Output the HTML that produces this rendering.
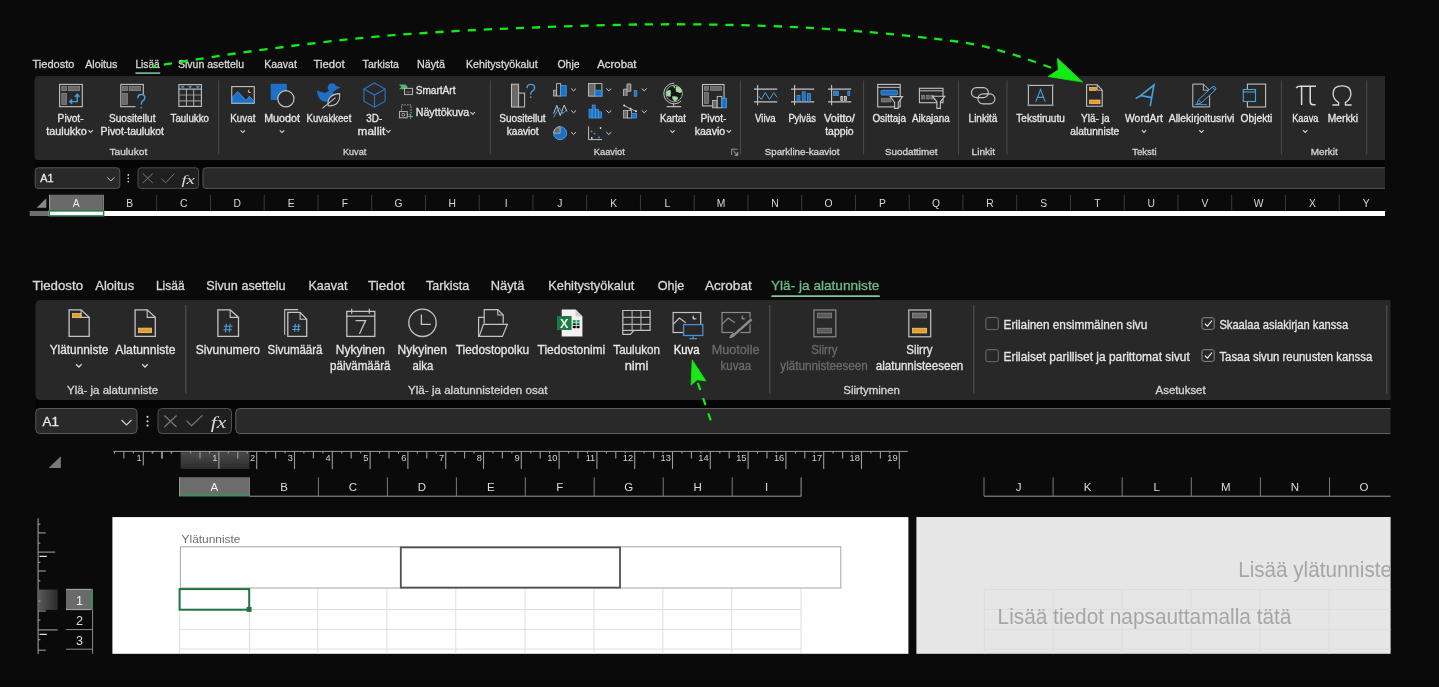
<!DOCTYPE html>
<html><head><meta charset="utf-8"><style>
html,body{margin:0;padding:0;background:#0a0a0a;width:1439px;height:687px;overflow:hidden}
svg{display:block;font-family:"Liberation Sans",sans-serif;will-change:transform}
</style></head><body>
<svg width="1439" height="687" viewBox="0 0 1439 687">
<rect x="0" y="0" width="1439" height="687" fill="#0a0a0a"/>
<text x="32.5" y="68.0" font-size="11.5" fill="#d9d9d9" font-weight="400" textLength="41.9" lengthAdjust="spacingAndGlyphs" stroke="#d9d9d9" stroke-width="0.3">Tiedosto</text>
<text x="85.2" y="68.0" font-size="11.5" fill="#d9d9d9" font-weight="400" textLength="32.2" lengthAdjust="spacingAndGlyphs" stroke="#d9d9d9" stroke-width="0.3">Aloitus</text>
<text x="135.4" y="68.0" font-size="11.5" fill="#d9d9d9" font-weight="400" textLength="24.3" lengthAdjust="spacingAndGlyphs" stroke="#d9d9d9" stroke-width="0.3">Lisää</text>
<text x="178.0" y="68.0" font-size="11.5" fill="#d9d9d9" font-weight="400" textLength="66.0" lengthAdjust="spacingAndGlyphs" stroke="#d9d9d9" stroke-width="0.3">Sivun asettelu</text>
<text x="264.2" y="68.0" font-size="11.5" fill="#d9d9d9" font-weight="400" textLength="32.7" lengthAdjust="spacingAndGlyphs" stroke="#d9d9d9" stroke-width="0.3">Kaavat</text>
<text x="313.6" y="68.0" font-size="11.5" fill="#d9d9d9" font-weight="400" textLength="31.0" lengthAdjust="spacingAndGlyphs" stroke="#d9d9d9" stroke-width="0.3">Tiedot</text>
<text x="362.6" y="68.0" font-size="11.5" fill="#d9d9d9" font-weight="400" textLength="36.4" lengthAdjust="spacingAndGlyphs" stroke="#d9d9d9" stroke-width="0.3">Tarkista</text>
<text x="416.9" y="68.0" font-size="11.5" fill="#d9d9d9" font-weight="400" textLength="28.1" lengthAdjust="spacingAndGlyphs" stroke="#d9d9d9" stroke-width="0.3">Näytä</text>
<text x="465.9" y="68.0" font-size="11.5" fill="#d9d9d9" font-weight="400" textLength="71.9" lengthAdjust="spacingAndGlyphs" stroke="#d9d9d9" stroke-width="0.3">Kehitystyökalut</text>
<text x="557.4" y="68.0" font-size="11.5" fill="#d9d9d9" font-weight="400" textLength="22.2" lengthAdjust="spacingAndGlyphs" stroke="#d9d9d9" stroke-width="0.3">Ohje</text>
<text x="597.2" y="68.0" font-size="11.5" fill="#d9d9d9" font-weight="400" textLength="39.3" lengthAdjust="spacingAndGlyphs" stroke="#d9d9d9" stroke-width="0.3">Acrobat</text>
<rect x="135.2" y="72.2" width="25.3" height="1.7" fill="#6fb48b" rx="0.8" />
<path d="M38.5 76 H1385 V160 H38.5 Q34.5 160 34.5 156 V80 Q34.5 76 38.5 76 Z" fill="#282828"/>
<line x1="218.6" y1="80.6" x2="218.6" y2="154.6" stroke="#4a4a4a" stroke-width="1" />
<line x1="490.4" y1="80.6" x2="490.4" y2="154.6" stroke="#4a4a4a" stroke-width="1" />
<line x1="740.5" y1="80.6" x2="740.5" y2="154.6" stroke="#4a4a4a" stroke-width="1" />
<line x1="863.6" y1="80.6" x2="863.6" y2="154.6" stroke="#4a4a4a" stroke-width="1" />
<line x1="958.5" y1="80.6" x2="958.5" y2="154.6" stroke="#4a4a4a" stroke-width="1" />
<line x1="1007" y1="80.6" x2="1007" y2="154.6" stroke="#4a4a4a" stroke-width="1" />
<line x1="1281.4" y1="80.6" x2="1281.4" y2="154.6" stroke="#4a4a4a" stroke-width="1" />
<line x1="1366.7" y1="80.6" x2="1366.7" y2="154.6" stroke="#4a4a4a" stroke-width="1" />
<text x="57.6" y="121.5" font-size="10.1" fill="#e6e6e6" font-weight="400" textLength="26.0" lengthAdjust="spacingAndGlyphs" stroke="#e6e6e6" stroke-width="0.3">Pivot-</text>
<text x="46.2" y="134.9" font-size="10.1" fill="#e6e6e6" font-weight="400" textLength="40.6" lengthAdjust="spacingAndGlyphs" stroke="#e6e6e6" stroke-width="0.3">taulukko</text>
<text x="109.0" y="121.5" font-size="10.1" fill="#e6e6e6" font-weight="400" textLength="46.5" lengthAdjust="spacingAndGlyphs" stroke="#e6e6e6" stroke-width="0.3">Suositellut</text>
<text x="100.6" y="134.9" font-size="10.1" fill="#e6e6e6" font-weight="400" textLength="63.3" lengthAdjust="spacingAndGlyphs" stroke="#e6e6e6" stroke-width="0.3">Pivot-taulukot</text>
<text x="170.6" y="121.5" font-size="10.1" fill="#e6e6e6" font-weight="400" textLength="38.4" lengthAdjust="spacingAndGlyphs" stroke="#e6e6e6" stroke-width="0.3">Taulukko</text>
<text x="230.3" y="121.5" font-size="10.1" fill="#e6e6e6" font-weight="400" textLength="25.1" lengthAdjust="spacingAndGlyphs" stroke="#e6e6e6" stroke-width="0.3">Kuvat</text>
<text x="264.2" y="121.5" font-size="10.1" fill="#e6e6e6" font-weight="400" textLength="35.7" lengthAdjust="spacingAndGlyphs" stroke="#e6e6e6" stroke-width="0.3">Muodot</text>
<text x="306.6" y="121.5" font-size="10.1" fill="#e6e6e6" font-weight="400" textLength="44.7" lengthAdjust="spacingAndGlyphs" stroke="#e6e6e6" stroke-width="0.3">Kuvakkeet</text>
<text x="366.3" y="121.5" font-size="10.1" fill="#e6e6e6" font-weight="400" textLength="15.9" lengthAdjust="spacingAndGlyphs" stroke="#e6e6e6" stroke-width="0.3">3D-</text>
<text x="357.6" y="134.9" font-size="10.1" fill="#e6e6e6" font-weight="400" textLength="27.6" lengthAdjust="spacingAndGlyphs" stroke="#e6e6e6" stroke-width="0.3">mallit</text>
<text x="415.7" y="93.8" font-size="10.1" fill="#e6e6e6" font-weight="400" textLength="39.8" lengthAdjust="spacingAndGlyphs" stroke="#e6e6e6" stroke-width="0.3">SmartArt</text>
<text x="415.7" y="115.8" font-size="10.1" fill="#e6e6e6" font-weight="400" textLength="53.5" lengthAdjust="spacingAndGlyphs" stroke="#e6e6e6" stroke-width="0.3">Näyttökuva</text>
<text x="499.3" y="121.5" font-size="10.1" fill="#e6e6e6" font-weight="400" textLength="46.3" lengthAdjust="spacingAndGlyphs" stroke="#e6e6e6" stroke-width="0.3">Suositellut</text>
<text x="506.8" y="134.9" font-size="10.1" fill="#e6e6e6" font-weight="400" textLength="31.8" lengthAdjust="spacingAndGlyphs" stroke="#e6e6e6" stroke-width="0.3">kaaviot</text>
<text x="660.0" y="121.5" font-size="10.1" fill="#e6e6e6" font-weight="400" textLength="26.0" lengthAdjust="spacingAndGlyphs" stroke="#e6e6e6" stroke-width="0.3">Kartat</text>
<text x="700.4" y="121.5" font-size="10.1" fill="#e6e6e6" font-weight="400" textLength="26.1" lengthAdjust="spacingAndGlyphs" stroke="#e6e6e6" stroke-width="0.3">Pivot-</text>
<text x="694.7" y="134.9" font-size="10.1" fill="#e6e6e6" font-weight="400" textLength="30.5" lengthAdjust="spacingAndGlyphs" stroke="#e6e6e6" stroke-width="0.3">kaavio</text>
<text x="755.0" y="121.5" font-size="10.1" fill="#e6e6e6" font-weight="400" textLength="20.7" lengthAdjust="spacingAndGlyphs" stroke="#e6e6e6" stroke-width="0.3">Viiva</text>
<text x="788.4" y="121.5" font-size="10.1" fill="#e6e6e6" font-weight="400" textLength="27.5" lengthAdjust="spacingAndGlyphs" stroke="#e6e6e6" stroke-width="0.3">Pylväs</text>
<text x="823.9" y="121.5" font-size="10.1" fill="#e6e6e6" font-weight="400" textLength="31.0" lengthAdjust="spacingAndGlyphs" stroke="#e6e6e6" stroke-width="0.3">Voitto/</text>
<text x="825.2" y="134.9" font-size="10.1" fill="#e6e6e6" font-weight="400" textLength="28.5" lengthAdjust="spacingAndGlyphs" stroke="#e6e6e6" stroke-width="0.3">tappio</text>
<text x="872.4" y="121.5" font-size="10.1" fill="#e6e6e6" font-weight="400" textLength="33.5" lengthAdjust="spacingAndGlyphs" stroke="#e6e6e6" stroke-width="0.3">Osittaja</text>
<text x="912.0" y="121.5" font-size="10.1" fill="#e6e6e6" font-weight="400" textLength="37.7" lengthAdjust="spacingAndGlyphs" stroke="#e6e6e6" stroke-width="0.3">Aikajana</text>
<text x="968.6" y="121.5" font-size="10.1" fill="#e6e6e6" font-weight="400" textLength="28.8" lengthAdjust="spacingAndGlyphs" stroke="#e6e6e6" stroke-width="0.3">Linkitä</text>
<text x="1016.3" y="121.5" font-size="10.1" fill="#e6e6e6" font-weight="400" textLength="48.5" lengthAdjust="spacingAndGlyphs" stroke="#e6e6e6" stroke-width="0.3">Tekstiruutu</text>
<text x="1081.0" y="121.5" font-size="10.1" fill="#e6e6e6" font-weight="400" textLength="28.5" lengthAdjust="spacingAndGlyphs" stroke="#e6e6e6" stroke-width="0.3">Ylä- ja</text>
<text x="1070.3" y="134.9" font-size="10.1" fill="#e6e6e6" font-weight="400" textLength="48.9" lengthAdjust="spacingAndGlyphs" stroke="#e6e6e6" stroke-width="0.3">alatunniste</text>
<text x="1125.0" y="121.5" font-size="10.1" fill="#e6e6e6" font-weight="400" textLength="37.9" lengthAdjust="spacingAndGlyphs" stroke="#e6e6e6" stroke-width="0.3">WordArt</text>
<text x="1168.8" y="121.5" font-size="10.1" fill="#e6e6e6" font-weight="400" textLength="65.6" lengthAdjust="spacingAndGlyphs" stroke="#e6e6e6" stroke-width="0.3">Allekirjoitusrivi</text>
<text x="1240.6" y="121.5" font-size="10.1" fill="#e6e6e6" font-weight="400" textLength="31.8" lengthAdjust="spacingAndGlyphs" stroke="#e6e6e6" stroke-width="0.3">Objekti</text>
<text x="1292.2" y="121.5" font-size="10.1" fill="#e6e6e6" font-weight="400" textLength="26.2" lengthAdjust="spacingAndGlyphs" stroke="#e6e6e6" stroke-width="0.3">Kaava</text>
<text x="1327.8" y="121.5" font-size="10.1" fill="#e6e6e6" font-weight="400" textLength="30.2" lengthAdjust="spacingAndGlyphs" stroke="#e6e6e6" stroke-width="0.3">Merkki</text>
<path d="M88.4 130.2 L90.6 132.4 L92.8 130.2" fill="none" stroke="#d8d8d8" stroke-width="1.05"/>
<path d="M240.6 130.4 L242.8 132.6 L245.0 130.4" fill="none" stroke="#d8d8d8" stroke-width="1.05"/>
<path d="M279.8 130.4 L282.0 132.6 L284.2 130.4" fill="none" stroke="#d8d8d8" stroke-width="1.05"/>
<path d="M386.1 130.2 L388.3 132.4 L390.5 130.2" fill="none" stroke="#d8d8d8" stroke-width="1.05"/>
<path d="M470.5 112.1 L472.7 114.3 L474.9 112.1" fill="none" stroke="#d8d8d8" stroke-width="1.05"/>
<path d="M670.3 130.4 L672.5 132.6 L674.7 130.4" fill="none" stroke="#d8d8d8" stroke-width="1.05"/>
<path d="M726.6 130.2 L728.8 132.4 L731.0 130.2" fill="none" stroke="#d8d8d8" stroke-width="1.05"/>
<path d="M1141.8 130.2 L1144.0 132.4 L1146.2 130.2" fill="none" stroke="#d8d8d8" stroke-width="1.05"/>
<path d="M1199.2 130.2 L1201.4 132.4 L1203.6 130.2" fill="none" stroke="#d8d8d8" stroke-width="1.05"/>
<path d="M1303.0 130.2 L1305.2 132.4 L1307.4 130.2" fill="none" stroke="#d8d8d8" stroke-width="1.05"/>
<text x="109.5" y="154.7" font-size="9.6" fill="#d4d4d4" font-weight="400" textLength="37.7" lengthAdjust="spacingAndGlyphs" stroke="#d4d4d4" stroke-width="0.3">Taulukot</text>
<text x="342.9" y="154.7" font-size="9.6" fill="#d4d4d4" font-weight="400" textLength="23.4" lengthAdjust="spacingAndGlyphs" stroke="#d4d4d4" stroke-width="0.3">Kuvat</text>
<text x="593.8" y="154.7" font-size="9.6" fill="#d4d4d4" font-weight="400" textLength="31.0" lengthAdjust="spacingAndGlyphs" stroke="#d4d4d4" stroke-width="0.3">Kaaviot</text>
<text x="764.8" y="154.7" font-size="9.6" fill="#d4d4d4" font-weight="400" textLength="74.7" lengthAdjust="spacingAndGlyphs" stroke="#d4d4d4" stroke-width="0.3">Sparkline-kaaviot</text>
<text x="885.0" y="154.7" font-size="9.6" fill="#d4d4d4" font-weight="400" textLength="52.4" lengthAdjust="spacingAndGlyphs" stroke="#d4d4d4" stroke-width="0.3">Suodattimet</text>
<text x="971.6" y="154.7" font-size="9.6" fill="#d4d4d4" font-weight="400" textLength="23.4" lengthAdjust="spacingAndGlyphs" stroke="#d4d4d4" stroke-width="0.3">Linkit</text>
<text x="1132.2" y="154.7" font-size="9.6" fill="#d4d4d4" font-weight="400" textLength="24.4" lengthAdjust="spacingAndGlyphs" stroke="#d4d4d4" stroke-width="0.3">Teksti</text>
<text x="1310.7" y="154.7" font-size="9.6" fill="#d4d4d4" font-weight="400" textLength="27.1" lengthAdjust="spacingAndGlyphs" stroke="#d4d4d4" stroke-width="0.3">Merkit</text>
<rect x="34.5" y="160" width="1350.5" height="7.3" fill="#050505" />
<rect x="35.2" y="167.8" width="84.6" height="20.6" fill="#292929" rx="3" stroke="#565656" stroke-width="1" />
<text x="40.3" y="182.2" font-size="10.5" fill="#e8e8e8" font-weight="400" textLength="13.4" lengthAdjust="spacingAndGlyphs" stroke="#e8e8e8" stroke-width="0.3">A1</text>
<path d="M107.3 177.4 L110.8 181.0 L114.3 177.4" fill="none" stroke="#cfcfcf" stroke-width="1"/>
<circle cx="128.3" cy="175" r="0.9" fill="#d0d0d0"/>
<circle cx="128.3" cy="178.3" r="0.9" fill="#d0d0d0"/>
<circle cx="128.3" cy="181.6" r="0.9" fill="#d0d0d0"/>
<rect x="138" y="167.8" width="60.6" height="20.6" fill="#1f1f1f" rx="3" stroke="#4e4e4e" stroke-width="1" />
<path d="M1385 167.8 H206 Q203 167.8 203 170.8 V185.4 Q203 188.4 206 188.4 H1385" fill="#292929" stroke="#565656" stroke-width="1"/>
<rect x="30" y="194" width="1355" height="17" fill="#0a0a0a" />
<path d="M46.3 198.3 L46.3 207.8 L36.7 207.8 Z" fill="#8a8a8a"/>
<rect x="49.2" y="194.7" width="54.5" height="16" fill="#6a6a6a" />
<line x1="102.95" y1="195" x2="102.95" y2="210.5" stroke="#3c3c3c" stroke-width="1" />
<line x1="156.7" y1="195" x2="156.7" y2="210.5" stroke="#3c3c3c" stroke-width="1" />
<line x1="210.45" y1="195" x2="210.45" y2="210.5" stroke="#3c3c3c" stroke-width="1" />
<line x1="264.2" y1="195" x2="264.2" y2="210.5" stroke="#3c3c3c" stroke-width="1" />
<line x1="317.95" y1="195" x2="317.95" y2="210.5" stroke="#3c3c3c" stroke-width="1" />
<line x1="371.7" y1="195" x2="371.7" y2="210.5" stroke="#3c3c3c" stroke-width="1" />
<line x1="425.45" y1="195" x2="425.45" y2="210.5" stroke="#3c3c3c" stroke-width="1" />
<line x1="479.2" y1="195" x2="479.2" y2="210.5" stroke="#3c3c3c" stroke-width="1" />
<line x1="532.95" y1="195" x2="532.95" y2="210.5" stroke="#3c3c3c" stroke-width="1" />
<line x1="586.7" y1="195" x2="586.7" y2="210.5" stroke="#3c3c3c" stroke-width="1" />
<line x1="640.45" y1="195" x2="640.45" y2="210.5" stroke="#3c3c3c" stroke-width="1" />
<line x1="694.2" y1="195" x2="694.2" y2="210.5" stroke="#3c3c3c" stroke-width="1" />
<line x1="747.95" y1="195" x2="747.95" y2="210.5" stroke="#3c3c3c" stroke-width="1" />
<line x1="801.7" y1="195" x2="801.7" y2="210.5" stroke="#3c3c3c" stroke-width="1" />
<line x1="855.45" y1="195" x2="855.45" y2="210.5" stroke="#3c3c3c" stroke-width="1" />
<line x1="909.2" y1="195" x2="909.2" y2="210.5" stroke="#3c3c3c" stroke-width="1" />
<line x1="962.95" y1="195" x2="962.95" y2="210.5" stroke="#3c3c3c" stroke-width="1" />
<line x1="1016.7" y1="195" x2="1016.7" y2="210.5" stroke="#3c3c3c" stroke-width="1" />
<line x1="1070.45" y1="195" x2="1070.45" y2="210.5" stroke="#3c3c3c" stroke-width="1" />
<line x1="1124.2" y1="195" x2="1124.2" y2="210.5" stroke="#3c3c3c" stroke-width="1" />
<line x1="1177.95" y1="195" x2="1177.95" y2="210.5" stroke="#3c3c3c" stroke-width="1" />
<line x1="1231.7" y1="195" x2="1231.7" y2="210.5" stroke="#3c3c3c" stroke-width="1" />
<line x1="1285.45" y1="195" x2="1285.45" y2="210.5" stroke="#3c3c3c" stroke-width="1" />
<line x1="1339.2" y1="195" x2="1339.2" y2="210.5" stroke="#3c3c3c" stroke-width="1" />
<text x="76.1" y="206.8" font-size="10.3" fill="#f0f0f0" font-weight="400" text-anchor="middle">A</text>
<text x="129.8" y="206.8" font-size="10.3" fill="#d8d8d8" font-weight="400" text-anchor="middle">B</text>
<text x="183.6" y="206.8" font-size="10.3" fill="#d8d8d8" font-weight="400" text-anchor="middle">C</text>
<text x="237.3" y="206.8" font-size="10.3" fill="#d8d8d8" font-weight="400" text-anchor="middle">D</text>
<text x="291.1" y="206.8" font-size="10.3" fill="#d8d8d8" font-weight="400" text-anchor="middle">E</text>
<text x="344.8" y="206.8" font-size="10.3" fill="#d8d8d8" font-weight="400" text-anchor="middle">F</text>
<text x="398.6" y="206.8" font-size="10.3" fill="#d8d8d8" font-weight="400" text-anchor="middle">G</text>
<text x="452.3" y="206.8" font-size="10.3" fill="#d8d8d8" font-weight="400" text-anchor="middle">H</text>
<text x="506.1" y="206.8" font-size="10.3" fill="#d8d8d8" font-weight="400" text-anchor="middle">I</text>
<text x="559.9" y="206.8" font-size="10.3" fill="#d8d8d8" font-weight="400" text-anchor="middle">J</text>
<text x="613.6" y="206.8" font-size="10.3" fill="#d8d8d8" font-weight="400" text-anchor="middle">K</text>
<text x="667.4" y="206.8" font-size="10.3" fill="#d8d8d8" font-weight="400" text-anchor="middle">L</text>
<text x="721.1" y="206.8" font-size="10.3" fill="#d8d8d8" font-weight="400" text-anchor="middle">M</text>
<text x="774.9" y="206.8" font-size="10.3" fill="#d8d8d8" font-weight="400" text-anchor="middle">N</text>
<text x="828.6" y="206.8" font-size="10.3" fill="#d8d8d8" font-weight="400" text-anchor="middle">O</text>
<text x="882.4" y="206.8" font-size="10.3" fill="#d8d8d8" font-weight="400" text-anchor="middle">P</text>
<text x="936.1" y="206.8" font-size="10.3" fill="#d8d8d8" font-weight="400" text-anchor="middle">Q</text>
<text x="989.9" y="206.8" font-size="10.3" fill="#d8d8d8" font-weight="400" text-anchor="middle">R</text>
<text x="1043.6" y="206.8" font-size="10.3" fill="#d8d8d8" font-weight="400" text-anchor="middle">S</text>
<text x="1097.4" y="206.8" font-size="10.3" fill="#d8d8d8" font-weight="400" text-anchor="middle">T</text>
<text x="1151.1" y="206.8" font-size="10.3" fill="#d8d8d8" font-weight="400" text-anchor="middle">U</text>
<text x="1204.9" y="206.8" font-size="10.3" fill="#d8d8d8" font-weight="400" text-anchor="middle">V</text>
<text x="1258.6" y="206.8" font-size="10.3" fill="#d8d8d8" font-weight="400" text-anchor="middle">W</text>
<text x="1312.4" y="206.8" font-size="10.3" fill="#d8d8d8" font-weight="400" text-anchor="middle">X</text>
<text x="1366.1" y="206.8" font-size="10.3" fill="#d8d8d8" font-weight="400" text-anchor="middle">Y</text>
<rect x="29.7" y="211" width="18.6" height="5" fill="#6e6e6e" />
<rect x="48.3" y="211" width="1336.7" height="5" fill="#ffffff" />
<rect x="49.2" y="210.9" width="54.4" height="5" fill="none" stroke="#2f7d4f" stroke-width="1.5" />
<line x1="49.6" y1="195" x2="49.6" y2="210.2" stroke="#a4a4a4" stroke-width="1" />
<line x1="103.3" y1="195" x2="103.3" y2="210.2" stroke="#8a8a8a" stroke-width="1" />
<text x="32.6" y="289.9" font-size="13" fill="#d9d9d9" font-weight="400" textLength="50.5" lengthAdjust="spacingAndGlyphs" stroke="#d9d9d9" stroke-width="0.3">Tiedosto</text>
<text x="95.3" y="289.9" font-size="13" fill="#d9d9d9" font-weight="400" textLength="38.9" lengthAdjust="spacingAndGlyphs" stroke="#d9d9d9" stroke-width="0.3">Aloitus</text>
<text x="155.9" y="289.9" font-size="13" fill="#d9d9d9" font-weight="400" textLength="28.7" lengthAdjust="spacingAndGlyphs" stroke="#d9d9d9" stroke-width="0.3">Lisää</text>
<text x="206.3" y="289.9" font-size="13" fill="#d9d9d9" font-weight="400" textLength="79.3" lengthAdjust="spacingAndGlyphs" stroke="#d9d9d9" stroke-width="0.3">Sivun asettelu</text>
<text x="308.5" y="289.9" font-size="13" fill="#d9d9d9" font-weight="400" textLength="39.1" lengthAdjust="spacingAndGlyphs" stroke="#d9d9d9" stroke-width="0.3">Kaavat</text>
<text x="368.1" y="289.9" font-size="13" fill="#d9d9d9" font-weight="400" textLength="36.7" lengthAdjust="spacingAndGlyphs" stroke="#d9d9d9" stroke-width="0.3">Tiedot</text>
<text x="426.0" y="289.9" font-size="13" fill="#d9d9d9" font-weight="400" textLength="43.3" lengthAdjust="spacingAndGlyphs" stroke="#d9d9d9" stroke-width="0.3">Tarkista</text>
<text x="490.7" y="289.9" font-size="13" fill="#d9d9d9" font-weight="400" textLength="33.6" lengthAdjust="spacingAndGlyphs" stroke="#d9d9d9" stroke-width="0.3">Näytä</text>
<text x="548.3" y="289.9" font-size="13" fill="#d9d9d9" font-weight="400" textLength="86.0" lengthAdjust="spacingAndGlyphs" stroke="#d9d9d9" stroke-width="0.3">Kehitystyökalut</text>
<text x="657.7" y="289.9" font-size="13" fill="#d9d9d9" font-weight="400" textLength="26.6" lengthAdjust="spacingAndGlyphs" stroke="#d9d9d9" stroke-width="0.3">Ohje</text>
<text x="705.0" y="289.9" font-size="13" fill="#d9d9d9" font-weight="400" textLength="46.7" lengthAdjust="spacingAndGlyphs" stroke="#d9d9d9" stroke-width="0.3">Acrobat</text>
<text x="771.0" y="289.9" font-size="13" fill="#6dbb8a" font-weight="400" textLength="108.3" lengthAdjust="spacingAndGlyphs" stroke="#6dbb8a" stroke-width="0.3">Ylä- ja alatunniste</text>
<rect x="771.3" y="295.2" width="108.7" height="1.9" fill="#88c3a0" rx="0.9" />
<path d="M41 300 H1390.5 V400 H41 Q35.5 400 35.5 394.5 V305.5 Q35.5 300 41 300 Z" fill="#282828"/>
<line x1="185.8" y1="305" x2="185.8" y2="393.8" stroke="#4a4a4a" stroke-width="1.3" />
<line x1="769.7" y1="305" x2="769.7" y2="393.8" stroke="#4a4a4a" stroke-width="1.3" />
<line x1="973.8" y1="305" x2="973.8" y2="393.8" stroke="#4a4a4a" stroke-width="1.3" />
<line x1="1386.7" y1="305" x2="1386.7" y2="393.8" stroke="#4a4a4a" stroke-width="1.3" />
<text x="49.7" y="353.8" font-size="12.3" fill="#e6e6e6" font-weight="400" textLength="58.6" lengthAdjust="spacingAndGlyphs" stroke="#e6e6e6" stroke-width="0.3">Ylätunniste</text>
<text x="115.3" y="353.8" font-size="12.3" fill="#e6e6e6" font-weight="400" textLength="60.2" lengthAdjust="spacingAndGlyphs" stroke="#e6e6e6" stroke-width="0.3">Alatunniste</text>
<text x="195.8" y="353.8" font-size="12.3" fill="#e6e6e6" font-weight="400" textLength="64.2" lengthAdjust="spacingAndGlyphs" stroke="#e6e6e6" stroke-width="0.3">Sivunumero</text>
<text x="267.5" y="353.8" font-size="12.3" fill="#e6e6e6" font-weight="400" textLength="55.0" lengthAdjust="spacingAndGlyphs" stroke="#e6e6e6" stroke-width="0.3">Sivumäärä</text>
<text x="335.8" y="353.8" font-size="12.3" fill="#e6e6e6" font-weight="400" textLength="49.2" lengthAdjust="spacingAndGlyphs" stroke="#e6e6e6" stroke-width="0.3">Nykyinen</text>
<text x="330.0" y="369.5" font-size="12.3" fill="#e6e6e6" font-weight="400" textLength="60.5" lengthAdjust="spacingAndGlyphs" stroke="#e6e6e6" stroke-width="0.3">päivämäärä</text>
<text x="397.5" y="353.8" font-size="12.3" fill="#e6e6e6" font-weight="400" textLength="49.5" lengthAdjust="spacingAndGlyphs" stroke="#e6e6e6" stroke-width="0.3">Nykyinen</text>
<text x="412.5" y="369.5" font-size="12.3" fill="#e6e6e6" font-weight="400" textLength="20.8" lengthAdjust="spacingAndGlyphs" stroke="#e6e6e6" stroke-width="0.3">aika</text>
<text x="455.8" y="353.8" font-size="12.3" fill="#e6e6e6" font-weight="400" textLength="73.4" lengthAdjust="spacingAndGlyphs" stroke="#e6e6e6" stroke-width="0.3">Tiedostopolku</text>
<text x="537.5" y="353.8" font-size="12.3" fill="#e6e6e6" font-weight="400" textLength="67.8" lengthAdjust="spacingAndGlyphs" stroke="#e6e6e6" stroke-width="0.3">Tiedostonimi</text>
<text x="613.3" y="353.8" font-size="12.3" fill="#e6e6e6" font-weight="400" textLength="46.7" lengthAdjust="spacingAndGlyphs" stroke="#e6e6e6" stroke-width="0.3">Taulukon</text>
<text x="624.7" y="369.5" font-size="12.3" fill="#e6e6e6" font-weight="400" textLength="23.6" lengthAdjust="spacingAndGlyphs" stroke="#e6e6e6" stroke-width="0.3">nimi</text>
<text x="673.8" y="353.8" font-size="12.3" fill="#f6f6f6" font-weight="400" textLength="25.7" lengthAdjust="spacingAndGlyphs" stroke="#f6f6f6" stroke-width="0.3">Kuva</text>
<text x="711.7" y="353.8" font-size="12.3" fill="#6b6b6b" font-weight="400" textLength="47.8" lengthAdjust="spacingAndGlyphs" stroke="#6b6b6b" stroke-width="0.3">Muotoile</text>
<text x="720.5" y="369.5" font-size="12.3" fill="#6b6b6b" font-weight="400" textLength="30.7" lengthAdjust="spacingAndGlyphs" stroke="#6b6b6b" stroke-width="0.3">kuvaa</text>
<text x="811.3" y="353.8" font-size="12.3" fill="#6b6b6b" font-weight="400" textLength="26.2" lengthAdjust="spacingAndGlyphs" stroke="#6b6b6b" stroke-width="0.3">Siirry</text>
<text x="780.3" y="369.5" font-size="12.3" fill="#6b6b6b" font-weight="400" textLength="87.5" lengthAdjust="spacingAndGlyphs" stroke="#6b6b6b" stroke-width="0.3">ylätunnisteeseen</text>
<text x="906.3" y="353.8" font-size="12.3" fill="#e6e6e6" font-weight="400" textLength="26.2" lengthAdjust="spacingAndGlyphs" stroke="#e6e6e6" stroke-width="0.3">Siirry</text>
<text x="875.8" y="369.5" font-size="12.3" fill="#e6e6e6" font-weight="400" textLength="87.5" lengthAdjust="spacingAndGlyphs" stroke="#e6e6e6" stroke-width="0.3">alatunnisteeseen</text>
<text x="1003.5" y="328.8" font-size="12.3" fill="#e6e6e6" font-weight="400" textLength="143.8" lengthAdjust="spacingAndGlyphs" stroke="#e6e6e6" stroke-width="0.3">Erilainen ensimmäinen sivu</text>
<text x="1003.5" y="360.8" font-size="12.3" fill="#e6e6e6" font-weight="400" textLength="186.3" lengthAdjust="spacingAndGlyphs" stroke="#e6e6e6" stroke-width="0.3">Erilaiset parilliset ja parittomat sivut</text>
<text x="1219.4" y="328.8" font-size="12.3" fill="#e6e6e6" font-weight="400" textLength="128.7" lengthAdjust="spacingAndGlyphs" stroke="#e6e6e6" stroke-width="0.3">Skaalaa asiakirjan kanssa</text>
<text x="1219.4" y="360.8" font-size="12.3" fill="#e6e6e6" font-weight="400" textLength="152.9" lengthAdjust="spacingAndGlyphs" stroke="#e6e6e6" stroke-width="0.3">Tasaa sivun reunusten kanssa</text>
<path d="M76.0 364.2 L78.8 367.0 L81.6 364.2" fill="none" stroke="#dadada" stroke-width="1.25"/>
<path d="M142.2 364.2 L145.0 367.0 L147.8 364.2" fill="none" stroke="#dadada" stroke-width="1.25"/>
<text x="67.0" y="393.8" font-size="10.2" fill="#d4d4d4" font-weight="400" textLength="91.0" lengthAdjust="spacingAndGlyphs" stroke="#d4d4d4" stroke-width="0.3">Ylä- ja alatunniste</text>
<text x="408.0" y="393.8" font-size="10.2" fill="#d4d4d4" font-weight="400" textLength="139.5" lengthAdjust="spacingAndGlyphs" stroke="#d4d4d4" stroke-width="0.3">Ylä- ja alatunnisteiden osat</text>
<text x="843.3" y="393.8" font-size="10.2" fill="#d4d4d4" font-weight="400" textLength="56.7" lengthAdjust="spacingAndGlyphs" stroke="#d4d4d4" stroke-width="0.3">Siirtyminen</text>
<text x="1155.6" y="393.8" font-size="10.2" fill="#d4d4d4" font-weight="400" textLength="50.0" lengthAdjust="spacingAndGlyphs" stroke="#d4d4d4" stroke-width="0.3">Asetukset</text>
<rect x="35.5" y="400" width="1355" height="8" fill="#050505" />
<rect x="35.8" y="408.5" width="101.2" height="25" fill="#292929" rx="4" stroke="#585858" stroke-width="1" />
<text x="42.5" y="426.2" font-size="13" fill="#e8e8e8" font-weight="400" textLength="16.3" lengthAdjust="spacingAndGlyphs" stroke="#e8e8e8" stroke-width="0.3">A1</text>
<path d="M121.5 420.0 L126.5 425.0 L131.5 420.0" fill="none" stroke="#d0d0d0" stroke-width="1.2"/>
<circle cx="147.5" cy="416.8" r="1.1" fill="#d0d0d0"/>
<circle cx="147.5" cy="421.3" r="1.1" fill="#d0d0d0"/>
<circle cx="147.5" cy="425.6" r="1.1" fill="#d0d0d0"/>
<rect x="158" y="408.5" width="73.5" height="25" fill="#1f1f1f" rx="4" stroke="#505050" stroke-width="1" />
<path d="M1390.5 408.5 H239.8 Q235.8 408.5 235.8 412.5 V429.5 Q235.8 433.5 239.8 433.5 H1390.5" fill="#292929" stroke="#5e5e5e" stroke-width="1"/>
<path d="M60.8 456.3 L60.8 468 L48.7 468 Z" fill="#7a7a7a"/>
<rect x="112.4" y="517.1" width="796.0" height="136.7" fill="#ffffff" />
<rect x="916.4" y="517" width="474.2" height="136.8" fill="#e6e6e6" />
<rect x="59.6" y="84.4" width="22.7" height="22.3" stroke="#c4c4c4" stroke-width="1.1" fill="none" />
<rect x="61.8" y="86.3" width="4.8" height="4.4" stroke="#8c8c8c" stroke-width="0.7" fill="#6a6a6a" />
<rect x="68.4" y="86.3" width="11.3" height="4.4" stroke="#8c8c8c" stroke-width="0.7" fill="#6a6a6a" />
<rect x="61.8" y="93.3" width="4.8" height="11.2" stroke="#8c8c8c" stroke-width="0.7" fill="#6a6a6a" />
<path d="M71 101.6 H77.2 V95.5" stroke="#4aa0dc" stroke-width="1.4" fill="none" />
<path d="M74.6 96.6 L77.2 93.4 L79.8 96.6 Z" stroke="#4aa0dc" stroke-width="0.6" fill="#4aa0dc" />
<path d="M72 99 L69 101.6 L72 104.2 Z" stroke="#4aa0dc" stroke-width="0.6" fill="#4aa0dc" />
<rect x="120.8" y="84.4" width="22.5" height="22.3" stroke="#c4c4c4" stroke-width="1.1" fill="none" />
<rect x="122.6" y="86.3" width="4.8" height="4.4" stroke="#8c8c8c" stroke-width="0.7" fill="#6a6a6a" />
<rect x="129.2" y="86.3" width="11.3" height="4.4" stroke="#8c8c8c" stroke-width="0.7" fill="#6a6a6a" />
<rect x="122.6" y="93.3" width="4.8" height="11.2" stroke="#8c8c8c" stroke-width="0.7" fill="#6a6a6a" />
<rect x="135.5" y="95" width="10" height="14" stroke="none" stroke-width="0" fill="#282828" />
<path d="M137.8 98.2 Q137.8 94.6 141.3 94.6 Q144.8 94.6 144.8 97.8 Q144.8 99.8 142.5 101.2 Q141.3 102 141.3 104.6" stroke="#4aa0dc" stroke-width="1.5" fill="none" />
<circle cx="141.3" cy="107.6" r="0.9" stroke="none" stroke-width="0" fill="#4aa0dc"/>
<rect x="178.9" y="84.6" width="22.5" height="21.8" stroke="#c4c4c4" stroke-width="1.1" fill="none" />
<path d="M178.9 89.1 H201.4" stroke="#c4c4c4" stroke-width="1.1" fill="none" />
<path d="M180.9 86.2 h3.4 l-1.7 2.1 Z" stroke="#4aa0dc" stroke-width="0.4" fill="#4aa0dc" />
<path d="M188.5 86.2 h3.4 l-1.7 2.1 Z" stroke="#4aa0dc" stroke-width="0.4" fill="#4aa0dc" />
<path d="M196.1 86.2 h3.4 l-1.7 2.1 Z" stroke="#4aa0dc" stroke-width="0.4" fill="#4aa0dc" />
<path d="M178.9 95 H201.4 M178.9 100.9 H201.4" stroke="#8e8e8e" stroke-width="1.2" fill="none" />
<path d="M186.4 89.1 V106.4 M193.7 89.1 V106.4" stroke="#b0b0b0" stroke-width="1" fill="none" />
<rect x="231.75" y="86.6" width="22.5" height="16.7" stroke="#c4c4c4" stroke-width="1.1" fill="none" />
<path d="M232.3 97.2 L237.7 91.6 L246.2 100.6 L249.3 96.3 L253.7 100.8 V102.8 H232.3 Z" stroke="#4aa0dc" stroke-width="0.8" fill="#1f6fc6" />
<circle cx="249.6" cy="91.3" r="1.7" stroke="none" stroke-width="0" fill="#e7c27a"/>
<circle cx="250.5" cy="90.6" r="1.5" stroke="none" stroke-width="0" fill="#1a1a1a"/>
<rect x="270.7" y="83.7" width="16.2" height="16.2" stroke="none" stroke-width="0" fill="#1f6fc6" rx="0.8" />
<circle cx="285.9" cy="98.8" r="8.1" stroke="#c4c4c4" stroke-width="1.2" fill="#282828"/>
<circle cx="332" cy="87.6" r="4.3" stroke="none" stroke-width="0" fill="#1f6fc6"/>
<path d="M335 85.6 L340.6 87.6 L335.5 90 Z" stroke="none" stroke-width="0" fill="#1f6fc6" />
<path d="M316.8 90.3 Q320 91.8 325 93 L329.5 90.5 Q334 92.2 334.5 95.5 Q331 101.5 325.5 101.8 Q318 101.5 316.8 90.3 Z" stroke="none" stroke-width="0" fill="#1f6fc6" />
<path d="M328.2 105.8 C326.8 98 332 94 339.6 93.6 C340.4 101.5 336.5 106.4 328.2 105.8 Z" stroke="#c4c4c4" stroke-width="1.1" fill="#282828" />
<path d="M322.3 108.4 L335.5 97.6" stroke="#c4c4c4" stroke-width="1.1" fill="none" />
<path d="M374.5 83 L385.1 89.1 V101.3 L374.5 107.2 L363.9 101.3 V89.1 Z M363.9 89.1 L374.5 95.1 L385.1 89.1 M374.5 95.1 V107.2" stroke="#2a76c6" stroke-width="1.1" fill="none" />
<path d="M399 84.6 H405.6 L407.9 86.9 L405.6 89.2 H399 L401.3 86.9 Z" stroke="none" stroke-width="0" fill="#52b56a" />
<rect x="404.5" y="88.3" width="8" height="6.3" stroke="#c4c4c4" stroke-width="0.9" fill="#282828" />
<path d="M406.3 92 H410.8" stroke="#8a8a8a" stroke-width="0.8" fill="none" />
<rect x="401.6" y="104.9" width="9.4" height="9.6" stroke="#c4c4c4" stroke-width="0.8" fill="none" stroke-dasharray="1.6 1.1"/>
<rect x="399.4" y="111.6" width="7.8" height="6.2" stroke="#c4c4c4" stroke-width="0.9" fill="#282828" />
<circle cx="403.3" cy="114.7" r="1.4" stroke="#c4c4c4" stroke-width="0.8" fill="none"/>
<path d="M410.6 114 V119 M408.1 116.5 H413.1" stroke="#52b56a" stroke-width="1" fill="none" />
<rect x="511.5" y="84.2" width="7.1" height="22.8" stroke="#c4c4c4" stroke-width="1" fill="#6a6a6a" />
<rect x="518.6" y="93.1" width="6" height="13.9" stroke="#c4c4c4" stroke-width="1" fill="#282828" />
<path d="M527 88.3 Q527 84.4 530.7 84.4 Q534.6 84.4 534.6 87.9 Q534.6 90.1 531.8 91.5 Q530.7 92.3 530.7 94.6" stroke="#4aa0dc" stroke-width="1.4" fill="none" />
<circle cx="530.7" cy="97.1" r="0.9" stroke="none" stroke-width="0" fill="#4aa0dc"/>
<rect x="553.6" y="90.2" width="3" height="5.8" stroke="#c4c4c4" stroke-width="0.7" fill="#6a6a6a" />
<rect x="556.6" y="83.6" width="4" height="12.4" stroke="#c4c4c4" stroke-width="0.9" fill="#282828" />
<rect x="560.6" y="85.6" width="5.6" height="10.4" stroke="#4aa0dc" stroke-width="0.8" fill="#1f6fc6" />
<rect x="588.6" y="83.6" width="13.3" height="12.4" stroke="#c4c4c4" stroke-width="0.9" fill="none" />
<rect x="588.6" y="83.6" width="6.4" height="12.4" stroke="#c4c4c4" stroke-width="0.7" fill="#6a6a6a" />
<rect x="595" y="90.2" width="6.9" height="5.8" stroke="#4aa0dc" stroke-width="0.8" fill="#1f6fc6" />
<path d="M623.6 96 V89.2 H627 V96 M627 89.2 V84 H630.8 V91.2 H627" stroke="#c4c4c4" stroke-width="0.9" fill="#6a6a6a" />
<rect x="634.2" y="90.6" width="2.6" height="5.6" stroke="#4aa0dc" stroke-width="0.8" fill="#1f6fc6" />
<path d="M553.6 113.6 L556.8 105.4 L560.2 115.6 L564.2 105 L567 111.5" stroke="#d2d2d2" stroke-width="0.9" fill="none" />
<path d="M553.6 117.2 L559.2 107.8 L563 113.6 L567 109" stroke="#4aa0dc" stroke-width="1" fill="none" />
<rect x="589" y="109.2" width="3" height="8.799999999999997" stroke="#4aa0dc" stroke-width="0.7" fill="#1f6fc6" />
<rect x="592.2" y="105" width="3" height="13" stroke="#4aa0dc" stroke-width="0.7" fill="#1f6fc6" />
<rect x="595.4" y="109.2" width="3" height="8.799999999999997" stroke="#4aa0dc" stroke-width="0.7" fill="#1f6fc6" />
<rect x="598.6" y="111.8" width="3" height="6.200000000000003" stroke="#4aa0dc" stroke-width="0.7" fill="#1f6fc6" />
<rect x="623.6" y="110.4" width="4" height="7.6" stroke="#c4c4c4" stroke-width="0.7" fill="#6a6a6a" />
<rect x="627.6" y="110.4" width="4" height="7.6" stroke="#c4c4c4" stroke-width="0.8" fill="#282828" />
<rect x="631.6" y="113.4" width="5" height="4.6" stroke="#4aa0dc" stroke-width="0.8" fill="#1f6fc6" />
<path d="M624 105.5 L630.5 108.8 L636.2 111.4" stroke="#c4c4c4" stroke-width="0.9" fill="none" />
<circle cx="624.2" cy="105.6" r="1" stroke="none" stroke-width="0" fill="#e0e0e0"/>
<circle cx="630.5" cy="108.8" r="1" stroke="none" stroke-width="0" fill="#e0e0e0"/>
<circle cx="636" cy="111.3" r="1" stroke="none" stroke-width="0" fill="#e0e0e0"/>
<circle cx="560.1" cy="133.2" r="6.5" stroke="#4aa0dc" stroke-width="1" fill="#1f6fc6"/>
<path d="M560.1 133.2 V126.7 A6.5 6.5 0 0 0 553.6 133.2 Z" stroke="#c4c4c4" stroke-width="0.7" fill="#6a6a6a" />
<path d="M588.6 126.4 V139.6 H602" stroke="#c4c4c4" stroke-width="1" fill="none" />
<circle cx="591.6" cy="131.4" r="0.9" stroke="none" stroke-width="0" fill="#4aa0dc"/>
<circle cx="594.6" cy="133.6" r="0.9" stroke="none" stroke-width="0" fill="#4aa0dc"/>
<circle cx="599.2" cy="137.4" r="0.9" stroke="none" stroke-width="0" fill="#4aa0dc"/>
<circle cx="600.6" cy="128" r="0.9" stroke="none" stroke-width="0" fill="#e0e0e0"/>
<circle cx="591.8" cy="138" r="0.9" stroke="none" stroke-width="0" fill="#e0e0e0"/>
<path d="M571.1 88.5 L573.6 90.9 L576.1 88.5" fill="none" stroke="#d0d0d0" stroke-width="1"/>
<path d="M571.1 110.4 L573.6 112.8 L576.1 110.4" fill="none" stroke="#d0d0d0" stroke-width="1"/>
<path d="M606.3 88.5 L608.8 90.9 L611.3 88.5" fill="none" stroke="#d0d0d0" stroke-width="1"/>
<path d="M606.3 110.4 L608.8 112.8 L611.3 110.4" fill="none" stroke="#d0d0d0" stroke-width="1"/>
<path d="M641.7 88.5 L644.2 90.9 L646.7 88.5" fill="none" stroke="#d0d0d0" stroke-width="1"/>
<path d="M641.7 110.4 L644.2 112.8 L646.7 110.4" fill="none" stroke="#d0d0d0" stroke-width="1"/>
<path d="M571.1 132.1 L573.6 134.5 L576.1 132.1" fill="none" stroke="#d0d0d0" stroke-width="1"/>
<path d="M606.3 132.1 L608.8 134.5 L611.3 132.1" fill="none" stroke="#d0d0d0" stroke-width="1"/>
<circle cx="674.2" cy="93.5" r="8.2" stroke="#b4b4b4" stroke-width="0.9" fill="#151a15"/>
<path d="M676 86.2 Q680.5 86.5 682 90.5 Q681.5 93.5 679.5 93 Q677.5 91.5 676.5 92 Q675 90 676 86.2 Z M666.2 92 Q668 89.5 670.5 90 Q671.5 93 670.5 96.5 Q668 97 666.5 95.5 Z M672 96.5 Q675.5 95.5 678.2 97.5 Q677.5 100.8 674.5 101.3 Q672 100 672 96.5 Z M673.5 85.6 Q675 85.5 675.2 87.5 L673.8 88.5 Z" stroke="none" stroke-width="0" fill="#9fdca6" />
<path d="M674.2 83.2 A10.3 10.3 0 1 0 681.2 101" stroke="#c8c8c8" stroke-width="1" fill="none" />
<path d="M673.6 103.6 V106.4 M666.6 106.6 H681.2" stroke="#b8b8b8" stroke-width="1.1" fill="none" />
<path d="M731.6 155 V149.2 H737.6" stroke="#a0a0a0" stroke-width="0.9" fill="none" />
<path d="M733.4 151 L737.6 155.2 M734.6 155.2 H737.6 V152.2" stroke="#c0c0c0" stroke-width="0.9" fill="none" />
<rect x="702.5" y="84.5" width="21.5" height="21.4" stroke="#c4c4c4" stroke-width="1.1" fill="none" />
<rect x="704.6" y="86.3" width="4" height="4" stroke="#8c8c8c" stroke-width="0.7" fill="#6a6a6a" />
<rect x="710.6" y="86.3" width="11" height="4" stroke="#8c8c8c" stroke-width="0.7" fill="#6a6a6a" />
<rect x="704.6" y="92.5" width="4" height="11" stroke="#8c8c8c" stroke-width="0.7" fill="#6a6a6a" />
<rect x="712.6" y="100.4" width="4.6" height="7.4" stroke="#c4c4c4" stroke-width="0.8" fill="#6a6a6a" />
<rect x="717.2" y="96.4" width="4.6" height="11.4" stroke="#c4c4c4" stroke-width="0.9" fill="#282828" />
<rect x="721.8" y="98.2" width="4.6" height="9.6" stroke="#4aa0dc" stroke-width="0.9" fill="#1f6fc6" />
<path d="M754 89.1 H777.2 M754 101.9 H777.2" stroke="#c4c4c4" stroke-width="1.1" fill="none" />
<path d="M757.6 85 V105.3" stroke="#c4c4c4" stroke-width="1.1" fill="none" />
<path d="M791 89.1 H814.2 M791 101.9 H814.2" stroke="#c4c4c4" stroke-width="1.1" fill="none" />
<path d="M794.6 85 V105.3" stroke="#c4c4c4" stroke-width="1.1" fill="none" />
<path d="M828 89.1 H851.2 M828 101.9 H851.2" stroke="#c4c4c4" stroke-width="1.1" fill="none" />
<path d="M831.6 85 V105.3" stroke="#c4c4c4" stroke-width="1.1" fill="none" />
<path d="M758.4 95.8 L761.2 99.4 L765.3 92.6 L769.5 99.4 L773.7 92.6 L777.2 97.4" stroke="#4aa0dc" stroke-width="1" fill="none" />
<rect x="797" y="95.4" width="3" height="6" stroke="#4aa0dc" stroke-width="0.7" fill="#1f6fc6" />
<rect x="802.2" y="91.8" width="3" height="9.6" stroke="#4aa0dc" stroke-width="0.7" fill="#1f6fc6" />
<rect x="807.4" y="93.6" width="3" height="7.8" stroke="#4aa0dc" stroke-width="0.7" fill="#1f6fc6" />
<rect x="833.6" y="91.2" width="2" height="4.4" stroke="#4aa0dc" stroke-width="0.7" fill="#1f6fc6" />
<rect x="836.6" y="91.2" width="2" height="4.4" stroke="#4aa0dc" stroke-width="0.7" fill="#1f6fc6" />
<rect x="847.8" y="91.2" width="2" height="4.4" stroke="#4aa0dc" stroke-width="0.7" fill="#1f6fc6" />
<rect x="840.8" y="96.4" width="2" height="4" stroke="#d8d8d8" stroke-width="0.7" fill="#8a8a8a" />
<rect x="844.4" y="96.4" width="2" height="4" stroke="#d8d8d8" stroke-width="0.7" fill="#8a8a8a" />
<rect x="877.7" y="84.4" width="22.5" height="22.5" stroke="#c4c4c4" stroke-width="1.1" fill="none" />
<path d="M877.7 87.3 H900.2" stroke="#c4c4c4" stroke-width="1" fill="none" />
<rect x="880.9" y="90.3" width="16.6" height="4.8" stroke="#4aa0dc" stroke-width="0.7" fill="#1f6fc6" rx="1.2" />
<rect x="881.2" y="98.2" width="9.8" height="3.8" stroke="#8c8c8c" stroke-width="0.6" fill="#6a6a6a" />
<path d="M890.3 96.6 H902.5 L898.2 102.4 V108.4 H894.6 V102.4 Z" stroke="#c4c4c4" stroke-width="1.1" fill="#282828" />
<rect x="919.4" y="88.3" width="23.6" height="14.4" stroke="#c4c4c4" stroke-width="1.1" fill="none" />
<path d="M919.4 90.8 H943" stroke="#c4c4c4" stroke-width="1" fill="none" />
<rect x="921.6" y="95.2" width="3" height="3.8" stroke="#8c8c8c" stroke-width="0.6" fill="#6a6a6a" />
<rect x="926.2" y="95.2" width="3" height="3.8" stroke="#8c8c8c" stroke-width="0.6" fill="#6a6a6a" />
<rect x="930.8" y="95.2" width="3" height="3.8" stroke="#8c8c8c" stroke-width="0.6" fill="#6a6a6a" />
<path d="M932.4 96.2 H944.8 L940.4 101.8 V108.4 H936.9 V101.8 Z" stroke="#c4c4c4" stroke-width="1.1" fill="#282828" />
<rect x="971.4" y="87.6" width="17" height="10" stroke="#c4c4c4" stroke-width="1.1" fill="none" rx="5" />
<rect x="977.9" y="93.9" width="17" height="10" stroke="#c4c4c4" stroke-width="1.1" fill="none" rx="5" />
<rect x="1028.4" y="85.4" width="24.2" height="19.8" stroke="#c4c4c4" stroke-width="1.1" fill="none" />
<circle cx="1028.4" cy="85.4" r="1.1" stroke="none" stroke-width="0" fill="#4aa0dc"/>
<circle cx="1052.6" cy="85.4" r="1.1" stroke="none" stroke-width="0" fill="#4aa0dc"/>
<circle cx="1028.4" cy="105.2" r="1.1" stroke="none" stroke-width="0" fill="#4aa0dc"/>
<circle cx="1052.6" cy="105.2" r="1.1" stroke="none" stroke-width="0" fill="#4aa0dc"/>
<path d="M1035.8 101.6 L1040.5 89.6 L1045.2 101.6 M1037.3 97.4 H1043.7" stroke="#4aa0dc" stroke-width="1.1" fill="none" />
<path d="M1086.6 84.8 H1097.2 L1102.2 90.2 V106.2 H1086.6 Z" stroke="#c4c4c4" stroke-width="1.1" fill="#282828" />
<path d="M1097.2 84.8 V90.2 H1102.2" stroke="#c4c4c4" stroke-width="0.9" fill="none" />
<rect x="1089.4" y="87.3" width="7" height="3.3" stroke="#f6cf86" stroke-width="0.6" fill="#e89f2a" />
<rect x="1089.4" y="100" width="10.6" height="3.8" stroke="#f6cf86" stroke-width="0.6" fill="#e89f2a" />
<path d="M1135.6 98.6 L1140.6 95.6 M1138.6 97.2 L1154 85 L1150.2 106.2 M1141 95.6 L1151.6 97.6" stroke="#4aa0dc" stroke-width="1.6" fill="none" />
<path d="M1192.8 84.1 H1203.4 L1209.6 90.2 V106.9 H1192.8 Z" stroke="#c4c4c4" stroke-width="1" fill="#282828" />
<path d="M1203.4 84.1 V90.2 H1209.6" stroke="#c4c4c4" stroke-width="0.9" fill="none" />
<path d="M1196.60 104.40 L1198.48 99.80 L1212.23 87.08 L1215.08 90.17 L1201.33 102.89 Z" stroke="#4aa0dc" stroke-width="1.0" fill="#282828" />
<path d="M1212.23 87.08 A2.1 2.1 0 0 1 1215.08 90.17" stroke="#4aa0dc" stroke-width="1.0" fill="none" />
<path d="M1198.48 99.80 L1201.33 102.89" stroke="#4aa0dc" stroke-width="0.9" fill="none" />
<path d="M1194.8 104.6 H1207" stroke="#4aa0dc" stroke-width="0.9" fill="none" />
<rect x="1247.4" y="84.1" width="18.2" height="22.9" stroke="#c4c4c4" stroke-width="1.1" fill="none" />
<rect x="1243.3" y="89.5" width="12.2" height="12" stroke="#4aa0dc" stroke-width="1.1" fill="#282828" />
<path d="M1243.3 92 H1255.5" stroke="#4aa0dc" stroke-width="1.1" fill="none" />
<path d="M1296.2 88 Q1297.4 86.3 1300 86.3 H1316 M1301.6 86.6 V104.9 M1310.2 86.6 V101.6 Q1310.2 104.8 1313 104.8 H1315.6" stroke="#dadada" stroke-width="1.5" fill="none" />
<path d="M1332.4 105 H1338.6 V102.6 Q1333.1 99.2 1333.1 93.6 Q1333.1 85.9 1342 85.9 Q1350.9 85.9 1350.9 93.6 Q1350.9 99.2 1345.4 102.6 V105 H1351.6" stroke="#d6d6d6" stroke-width="1.3" fill="none" />
<path d="M142.8 173.5 L152.8 183 M152.8 173.5 L142.8 183" stroke="#7a7a7a" stroke-width="1" fill="none" />
<path d="M161.5 178.6 L165.6 182.8 L174.4 173.6" stroke="#7a7a7a" stroke-width="1" fill="none" />
<text x="181.4" y="184.2" font-family="Liberation Serif" font-style="italic" font-size="13" fill="#dadada" textLength="13.4" lengthAdjust="spacingAndGlyphs">fx</text>
<path d="M69.1 309.8 H81.1 L89.2 317.4 V336.3 H69.1 Z" stroke="#c4c4c4" stroke-width="1.3" fill="#282828" />
<path d="M81.1 309.8 V317.4 H89.2" stroke="#c4c4c4" stroke-width="1.1" fill="none" />
<rect x="72.5" y="313.5" width="8.4" height="4.2" stroke="#f6cf86" stroke-width="0.7" fill="#e89f2a" />
<path d="M135.1 309.8 H147.2 L155.3 317.4 V336.3 H135.1 Z" stroke="#c4c4c4" stroke-width="1.3" fill="#282828" />
<path d="M147.2 309.8 V317.4 H155.3" stroke="#c4c4c4" stroke-width="1.1" fill="none" />
<rect x="138.5" y="328.1" width="13.1" height="4.6" stroke="#f6cf86" stroke-width="0.7" fill="#e89f2a" />
<path d="M217.9 309.8 H230.2 L238.5 317.4 V336.3 H217.9 Z" stroke="#c4c4c4" stroke-width="1.3" fill="#282828" />
<path d="M230.2 309.8 V317.4 H238.5" stroke="#c4c4c4" stroke-width="1.1" fill="none" />
<path d="M226.4 323.6 L225.4 332.4 M230.2 323.6 L229.2 332.4 M223.8 326.2 H232.4 M223.3 329.8 H231.9" stroke="#4aa0dc" stroke-width="1.1" fill="none" />
<path d="M284.7 334.8 V309.6 H298.2" stroke="#c4c4c4" stroke-width="1.1" fill="none" />
<path d="M287.8 312.4 H300.1 L306.7 319.3 V336.3 H287.8 Z" stroke="#c4c4c4" stroke-width="1.3" fill="#282828" />
<path d="M300.1 312.4 V319.3 H306.7" stroke="#c4c4c4" stroke-width="1.1" fill="none" />
<path d="M295.4 323.9 L294.6 331.8 M298.8 323.9 L298 331.8 M292.7 326.3 H300.6 M292.3 329.5 H300.2" stroke="#4aa0dc" stroke-width="1.1" fill="none" />
<rect x="346.8" y="311.4" width="28" height="25" stroke="#c4c4c4" stroke-width="1.3" fill="none" />
<path d="M346.8 316.2 H374.8" stroke="#c4c4c4" stroke-width="1.2" fill="none" />
<path d="M351.7 308.8 V313.8 M369.3 308.8 V313.8" stroke="#c4c4c4" stroke-width="1.2" fill="none" />
<path d="M355.6 320.6 H365.6 L359.4 334" stroke="#c4c4c4" stroke-width="1.3" fill="none" />
<circle cx="422.5" cy="322.8" r="13.7" stroke="#c4c4c4" stroke-width="1.3" fill="none"/>
<path d="M421.4 314.4 V324.4 H430.8" stroke="#c4c4c4" stroke-width="1.3" fill="none" />
<path d="M484.2 323.6 V309.6 H497.8 L503.2 315 V323.6" stroke="#c4c4c4" stroke-width="1.2" fill="none" />
<path d="M497.8 309.6 V315 H503.2" stroke="#c4c4c4" stroke-width="1.1" fill="none" />
<path d="M484.2 317.4 H478.6 V336.4 H502.4" stroke="#c4c4c4" stroke-width="1.2" fill="none" />
<path d="M479.2 336.4 L483.4 324.4 H507.4 L502.4 336.4 Z" stroke="#c4c4c4" stroke-width="1.2" fill="#282828" />
<path d="M561.7 309.5 H575.6 L582.4 316.4 V336.4 H561.7 Z" stroke="none" stroke-width="0" fill="#f2f2f2" />
<path d="M575.6 309.5 V316.4 H582.4 Z" stroke="none" stroke-width="0" fill="#cfcfcf" />
<rect x="572.8" y="320.2" width="3" height="2.2" stroke="none" stroke-width="0" fill="#1f8f60" />
<rect x="576.6" y="320.2" width="3" height="2.2" stroke="none" stroke-width="0" fill="#1f9a68" />
<rect x="572.8" y="323.1" width="3" height="2.2" stroke="none" stroke-width="0" fill="#0d3b22" />
<rect x="576.6" y="323.1" width="3" height="2.2" stroke="none" stroke-width="0" fill="#1d6a48" />
<rect x="572.8" y="326.0" width="3" height="2.2" stroke="none" stroke-width="0" fill="#050805" />
<rect x="576.6" y="326.0" width="3" height="2.2" stroke="none" stroke-width="0" fill="#050505" />
<rect x="557" y="316" width="14.6" height="14" stroke="none" stroke-width="0" fill="#1d7a45" />
<text x="564.3" y="327.6" font-size="12.6" font-weight="700" fill="#eaf6ea" text-anchor="middle">X</text>
<path d="M622.8 310.5 H650.1 V330.4 H633.9 L630.3 334.3 H622.8 Z" stroke="#c4c4c4" stroke-width="1.2" fill="none" />
<path d="M622.8 317.4 H650.1 M622.8 324.4 H650.1 M632.1 310.5 V330.4 M640.9 310.5 V330.4" stroke="#b0b0b0" stroke-width="1.1" fill="none" />
<path d="M622.8 330.4 H634.2" stroke="#c4c4c4" stroke-width="1.1" fill="none" />
<rect x="673.1" y="312.5" width="27.6" height="20" stroke="#c4c4c4" stroke-width="1.2" fill="none" />
<path d="M673.1 324.4 L679.3 318 L685.8 322.8" stroke="#c4c4c4" stroke-width="1.2" fill="none" />
<circle cx="694.6" cy="317.4" r="2.2" stroke="none" stroke-width="0" fill="#cfcfcf"/>
<circle cx="695.8" cy="316.6" r="2.0" stroke="none" stroke-width="0" fill="#282828"/>
<rect x="683.6" y="324.6" width="19.2" height="10.9" stroke="#4b8fd0" stroke-width="1.3" fill="#282828" />
<path d="M693.2 335.5 V338.4 M689.4 338.6 H697" stroke="#4b8fd0" stroke-width="1.2" fill="none" />
<rect x="722" y="312.5" width="28" height="20" stroke="#8a8a8a" stroke-width="1.2" fill="none" />
<path d="M722 324.4 L728.2 318 L734.8 322.8" stroke="#8a8a8a" stroke-width="1.2" fill="none" />
<circle cx="743.6" cy="317.4" r="2.2" stroke="none" stroke-width="0" fill="#8a8a8a"/>
<circle cx="744.8" cy="316.6" r="2.0" stroke="none" stroke-width="0" fill="#282828"/>
<path d="M733.4 335.6 L751.6 319.2" stroke="#282828" stroke-width="5" fill="none" />
<path d="M734.6 334.4 L751.6 319.2" stroke="#8a8a8a" stroke-width="2.6" fill="none" />
<path d="M729.8 337.8 Q731 333 735 333.6 Q736 336.8 729.8 337.8 Z" stroke="#8a8a8a" stroke-width="1" fill="#8a8a8a" />
<rect x="813.9" y="310" width="21.9" height="26.8" stroke="#8c8c8c" stroke-width="1.2" fill="none" />
<rect x="817.3" y="313.1" width="14.4" height="4.8" stroke="#8a8a8a" stroke-width="0.7" fill="#5c5c5c" />
<rect x="817.3" y="328.2" width="14.4" height="4.8" stroke="#8a8a8a" stroke-width="0.7" fill="#5c5c5c" />
<rect x="908.8" y="310" width="21.9" height="26.8" stroke="#c4c4c4" stroke-width="1.2" fill="none" />
<rect x="912.5" y="313.1" width="14.2" height="4.8" stroke="#9a9a9a" stroke-width="0.7" fill="#6a6a6a" />
<rect x="912.5" y="328.2" width="14.2" height="4.8" stroke="#f6cf86" stroke-width="0.7" fill="#e89f2a" />
<rect x="985.9" y="317.6" width="12.4" height="12" stroke="#707070" stroke-width="1" fill="none" rx="2" />
<rect x="985.9" y="349.7" width="12.4" height="12" stroke="#707070" stroke-width="1" fill="none" rx="2" />
<rect x="1202" y="317.7" width="12.2" height="11.7" stroke="#8a8a8a" stroke-width="1" fill="none" rx="2" />
<rect x="1202" y="349.7" width="12.2" height="11.7" stroke="#8a8a8a" stroke-width="1" fill="none" rx="2" />
<path d="M1204.8 323.6 L1207.4 326.2 L1212 320.6" stroke="#f0f0f0" stroke-width="1.1" fill="none" />
<path d="M1204.8 355.6 L1207.4 358.2 L1212 352.6" stroke="#f0f0f0" stroke-width="1.1" fill="none" />
<path d="M164.4 415.5 L176.6 427 M176.6 415.5 L164.4 427" stroke="#7a7a7a" stroke-width="1.2" fill="none" />
<path d="M186.5 420.6 L191.6 425.6 L202.4 415.4" stroke="#7a7a7a" stroke-width="1.2" fill="none" />
<text x="210.8" y="427.6" font-family="Liberation Serif" font-style="italic" font-size="17" fill="#dadada" textLength="15.6" lengthAdjust="spacingAndGlyphs">fx</text>
<path d="M113.3 451.4 H907.8" stroke="#9c9c9c" stroke-width="1" fill="none" />
<defs><linearGradient id="rg" x1="0" y1="0" x2="0" y2="1"><stop offset="0" stop-color="#4a4a4a"/><stop offset="1" stop-color="#2c2c2c"/></linearGradient><linearGradient id="vg" x1="0" y1="0" x2="1" y2="0"><stop offset="0" stop-color="#5a5a5a"/><stop offset="1" stop-color="#2a2a2a"/></linearGradient></defs>
<rect x="180.6" y="452.2" width="68.8" height="16.7" fill="url(#rg)" />
<path d="M143.3 451.4 V465.6" stroke="#9c9c9c" stroke-width="1.1" fill="none" />
<text x="141.7" y="461.3" font-size="9.3" fill="#d0d0d0" text-anchor="end">1</text>
<path d="M152.8 451.4 V453.6" stroke="#9c9c9c" stroke-width="1.1" fill="none" />
<path d="M162.2 451.4 V458.6" stroke="#9c9c9c" stroke-width="1.1" fill="none" />
<path d="M171.7 451.4 V453.6" stroke="#9c9c9c" stroke-width="1.1" fill="none" />
<path d="M190.6 451.4 V453.6" stroke="#9c9c9c" stroke-width="1.1" fill="none" />
<path d="M200.0 451.4 V458.6" stroke="#9c9c9c" stroke-width="1.1" fill="none" />
<path d="M209.5 451.4 V453.6" stroke="#9c9c9c" stroke-width="1.1" fill="none" />
<path d="M218.9 451.4 V468.9" stroke="#9c9c9c" stroke-width="1.1" fill="none" />
<text x="217.3" y="461.3" font-size="9.3" fill="#d0d0d0" text-anchor="end">1</text>
<path d="M228.3 451.4 V453.6" stroke="#9c9c9c" stroke-width="1.1" fill="none" />
<path d="M237.8 451.4 V458.6" stroke="#9c9c9c" stroke-width="1.1" fill="none" />
<path d="M247.2 451.4 V453.6" stroke="#9c9c9c" stroke-width="1.1" fill="none" />
<path d="M256.7 451.4 V468.9" stroke="#9c9c9c" stroke-width="1.1" fill="none" />
<text x="255.1" y="461.3" font-size="9.3" fill="#d0d0d0" text-anchor="end">2</text>
<path d="M266.1 451.4 V453.6" stroke="#9c9c9c" stroke-width="1.1" fill="none" />
<path d="M275.6 451.4 V458.6" stroke="#9c9c9c" stroke-width="1.1" fill="none" />
<path d="M285.1 451.4 V453.6" stroke="#9c9c9c" stroke-width="1.1" fill="none" />
<path d="M294.5 451.4 V468.9" stroke="#9c9c9c" stroke-width="1.1" fill="none" />
<text x="292.9" y="461.3" font-size="9.3" fill="#d0d0d0" text-anchor="end">3</text>
<path d="M303.9 451.4 V453.6" stroke="#9c9c9c" stroke-width="1.1" fill="none" />
<path d="M313.4 451.4 V458.6" stroke="#9c9c9c" stroke-width="1.1" fill="none" />
<path d="M322.9 451.4 V453.6" stroke="#9c9c9c" stroke-width="1.1" fill="none" />
<path d="M332.3 451.4 V468.9" stroke="#9c9c9c" stroke-width="1.1" fill="none" />
<text x="330.7" y="461.3" font-size="9.3" fill="#d0d0d0" text-anchor="end">4</text>
<path d="M341.8 451.4 V453.6" stroke="#9c9c9c" stroke-width="1.1" fill="none" />
<path d="M351.2 451.4 V458.6" stroke="#9c9c9c" stroke-width="1.1" fill="none" />
<path d="M360.7 451.4 V453.6" stroke="#9c9c9c" stroke-width="1.1" fill="none" />
<path d="M370.1 451.4 V468.9" stroke="#9c9c9c" stroke-width="1.1" fill="none" />
<text x="368.5" y="461.3" font-size="9.3" fill="#d0d0d0" text-anchor="end">5</text>
<path d="M379.6 451.4 V453.6" stroke="#9c9c9c" stroke-width="1.1" fill="none" />
<path d="M389.0 451.4 V458.6" stroke="#9c9c9c" stroke-width="1.1" fill="none" />
<path d="M398.5 451.4 V453.6" stroke="#9c9c9c" stroke-width="1.1" fill="none" />
<path d="M407.9 451.4 V468.9" stroke="#9c9c9c" stroke-width="1.1" fill="none" />
<text x="406.3" y="461.3" font-size="9.3" fill="#d0d0d0" text-anchor="end">6</text>
<path d="M417.3 451.4 V453.6" stroke="#9c9c9c" stroke-width="1.1" fill="none" />
<path d="M426.8 451.4 V458.6" stroke="#9c9c9c" stroke-width="1.1" fill="none" />
<path d="M436.2 451.4 V453.6" stroke="#9c9c9c" stroke-width="1.1" fill="none" />
<path d="M445.7 451.4 V468.9" stroke="#9c9c9c" stroke-width="1.1" fill="none" />
<text x="444.1" y="461.3" font-size="9.3" fill="#d0d0d0" text-anchor="end">7</text>
<path d="M455.1 451.4 V453.6" stroke="#9c9c9c" stroke-width="1.1" fill="none" />
<path d="M464.6 451.4 V458.6" stroke="#9c9c9c" stroke-width="1.1" fill="none" />
<path d="M474.1 451.4 V453.6" stroke="#9c9c9c" stroke-width="1.1" fill="none" />
<path d="M483.5 451.4 V468.9" stroke="#9c9c9c" stroke-width="1.1" fill="none" />
<text x="481.9" y="461.3" font-size="9.3" fill="#d0d0d0" text-anchor="end">8</text>
<path d="M492.9 451.4 V453.6" stroke="#9c9c9c" stroke-width="1.1" fill="none" />
<path d="M502.4 451.4 V458.6" stroke="#9c9c9c" stroke-width="1.1" fill="none" />
<path d="M511.9 451.4 V453.6" stroke="#9c9c9c" stroke-width="1.1" fill="none" />
<path d="M521.3 451.4 V468.9" stroke="#9c9c9c" stroke-width="1.1" fill="none" />
<text x="519.7" y="461.3" font-size="9.3" fill="#d0d0d0" text-anchor="end">9</text>
<path d="M530.8 451.4 V453.6" stroke="#9c9c9c" stroke-width="1.1" fill="none" />
<path d="M540.2 451.4 V458.6" stroke="#9c9c9c" stroke-width="1.1" fill="none" />
<path d="M549.6 451.4 V453.6" stroke="#9c9c9c" stroke-width="1.1" fill="none" />
<path d="M559.1 451.4 V468.9" stroke="#9c9c9c" stroke-width="1.1" fill="none" />
<text x="557.5" y="461.3" font-size="9.3" fill="#d0d0d0" text-anchor="end">10</text>
<path d="M568.6 451.4 V453.6" stroke="#9c9c9c" stroke-width="1.1" fill="none" />
<path d="M578.0 451.4 V458.6" stroke="#9c9c9c" stroke-width="1.1" fill="none" />
<path d="M587.5 451.4 V453.6" stroke="#9c9c9c" stroke-width="1.1" fill="none" />
<path d="M596.9 451.4 V468.9" stroke="#9c9c9c" stroke-width="1.1" fill="none" />
<text x="595.3" y="461.3" font-size="9.3" fill="#d0d0d0" text-anchor="end">11</text>
<path d="M606.4 451.4 V453.6" stroke="#9c9c9c" stroke-width="1.1" fill="none" />
<path d="M615.8 451.4 V458.6" stroke="#9c9c9c" stroke-width="1.1" fill="none" />
<path d="M625.2 451.4 V453.6" stroke="#9c9c9c" stroke-width="1.1" fill="none" />
<path d="M634.7 451.4 V468.9" stroke="#9c9c9c" stroke-width="1.1" fill="none" />
<text x="633.1" y="461.3" font-size="9.3" fill="#d0d0d0" text-anchor="end">12</text>
<path d="M644.1 451.4 V453.6" stroke="#9c9c9c" stroke-width="1.1" fill="none" />
<path d="M653.6 451.4 V458.6" stroke="#9c9c9c" stroke-width="1.1" fill="none" />
<path d="M663.0 451.4 V453.6" stroke="#9c9c9c" stroke-width="1.1" fill="none" />
<path d="M672.5 451.4 V468.9" stroke="#9c9c9c" stroke-width="1.1" fill="none" />
<text x="670.9" y="461.3" font-size="9.3" fill="#d0d0d0" text-anchor="end">13</text>
<path d="M682.0 451.4 V453.6" stroke="#9c9c9c" stroke-width="1.1" fill="none" />
<path d="M691.4 451.4 V458.6" stroke="#9c9c9c" stroke-width="1.1" fill="none" />
<path d="M700.9 451.4 V453.6" stroke="#9c9c9c" stroke-width="1.1" fill="none" />
<path d="M710.3 451.4 V468.9" stroke="#9c9c9c" stroke-width="1.1" fill="none" />
<text x="708.7" y="461.3" font-size="9.3" fill="#d0d0d0" text-anchor="end">14</text>
<path d="M719.8 451.4 V453.6" stroke="#9c9c9c" stroke-width="1.1" fill="none" />
<path d="M729.2 451.4 V458.6" stroke="#9c9c9c" stroke-width="1.1" fill="none" />
<path d="M738.6 451.4 V453.6" stroke="#9c9c9c" stroke-width="1.1" fill="none" />
<path d="M748.1 451.4 V468.9" stroke="#9c9c9c" stroke-width="1.1" fill="none" />
<text x="746.5" y="461.3" font-size="9.3" fill="#d0d0d0" text-anchor="end">15</text>
<path d="M757.5 451.4 V453.6" stroke="#9c9c9c" stroke-width="1.1" fill="none" />
<path d="M767.0 451.4 V458.6" stroke="#9c9c9c" stroke-width="1.1" fill="none" />
<path d="M776.4 451.4 V453.6" stroke="#9c9c9c" stroke-width="1.1" fill="none" />
<path d="M785.9 451.4 V468.9" stroke="#9c9c9c" stroke-width="1.1" fill="none" />
<text x="784.3" y="461.3" font-size="9.3" fill="#d0d0d0" text-anchor="end">16</text>
<path d="M795.4 451.4 V453.6" stroke="#9c9c9c" stroke-width="1.1" fill="none" />
<path d="M804.8 451.4 V458.6" stroke="#9c9c9c" stroke-width="1.1" fill="none" />
<path d="M814.2 451.4 V453.6" stroke="#9c9c9c" stroke-width="1.1" fill="none" />
<path d="M823.7 451.4 V468.9" stroke="#9c9c9c" stroke-width="1.1" fill="none" />
<text x="822.1" y="461.3" font-size="9.3" fill="#d0d0d0" text-anchor="end">17</text>
<path d="M833.1 451.4 V453.6" stroke="#9c9c9c" stroke-width="1.1" fill="none" />
<path d="M842.6 451.4 V458.6" stroke="#9c9c9c" stroke-width="1.1" fill="none" />
<path d="M852.0 451.4 V453.6" stroke="#9c9c9c" stroke-width="1.1" fill="none" />
<path d="M861.5 451.4 V468.9" stroke="#9c9c9c" stroke-width="1.1" fill="none" />
<text x="859.9" y="461.3" font-size="9.3" fill="#d0d0d0" text-anchor="end">18</text>
<path d="M870.9 451.4 V453.6" stroke="#9c9c9c" stroke-width="1.1" fill="none" />
<path d="M880.4 451.4 V458.6" stroke="#9c9c9c" stroke-width="1.1" fill="none" />
<path d="M889.8 451.4 V453.6" stroke="#9c9c9c" stroke-width="1.1" fill="none" />
<path d="M899.3 451.4 V468.9" stroke="#9c9c9c" stroke-width="1.1" fill="none" />
<text x="897.7" y="461.3" font-size="9.3" fill="#d0d0d0" text-anchor="end">19</text>
<path d="M114.5 451.4 V453.6" stroke="#9c9c9c" stroke-width="1.1" fill="none" />
<path d="M123.9 451.4 V458.6" stroke="#9c9c9c" stroke-width="1.1" fill="none" />
<path d="M133.4 451.4 V453.6" stroke="#9c9c9c" stroke-width="1.1" fill="none" />
<path d="M152.2 451.4 V453.6" stroke="#9c9c9c" stroke-width="1.1" fill="none" />
<path d="M161.7 451.4 V458.6" stroke="#9c9c9c" stroke-width="1.1" fill="none" />
<path d="M171.2 451.4 V453.6" stroke="#9c9c9c" stroke-width="1.1" fill="none" />
<rect x="179.4" y="477.2" width="70" height="19" fill="#6c6c6c" />
<rect x="179.4" y="494.4" width="70" height="2" fill="#3f8b5c" />
<path d="M179.6 477.2 V496.4" stroke="#9a9a9a" stroke-width="1" fill="none" />
<path d="M249.5 477.4 V496" stroke="#7a7a7a" stroke-width="1" fill="none" />
<path d="M318.4 477.4 V496" stroke="#7a7a7a" stroke-width="1" fill="none" />
<path d="M387.4 477.4 V496" stroke="#7a7a7a" stroke-width="1" fill="none" />
<path d="M456.4 477.4 V496" stroke="#7a7a7a" stroke-width="1" fill="none" />
<path d="M525.3 477.4 V496" stroke="#7a7a7a" stroke-width="1" fill="none" />
<path d="M594.2 477.4 V496" stroke="#7a7a7a" stroke-width="1" fill="none" />
<path d="M663.2 477.4 V496" stroke="#7a7a7a" stroke-width="1" fill="none" />
<path d="M732.2 477.4 V496" stroke="#7a7a7a" stroke-width="1" fill="none" />
<path d="M249.4 496.2 H801.2" stroke="#9a9a9a" stroke-width="1" fill="none" />
<path d="M801.1 477.4 V496.4" stroke="#9a9a9a" stroke-width="1" fill="none" />
<text x="214.4" y="490.8" font-size="11.5" fill="#f2f2f2" font-weight="400" text-anchor="middle">A</text>
<text x="284.0" y="490.8" font-size="11.5" fill="#dcdcdc" font-weight="400" text-anchor="middle">B</text>
<text x="352.9" y="490.8" font-size="11.5" fill="#dcdcdc" font-weight="400" text-anchor="middle">C</text>
<text x="421.9" y="490.8" font-size="11.5" fill="#dcdcdc" font-weight="400" text-anchor="middle">D</text>
<text x="490.8" y="490.8" font-size="11.5" fill="#dcdcdc" font-weight="400" text-anchor="middle">E</text>
<text x="559.8" y="490.8" font-size="11.5" fill="#dcdcdc" font-weight="400" text-anchor="middle">F</text>
<text x="628.7" y="490.8" font-size="11.5" fill="#dcdcdc" font-weight="400" text-anchor="middle">G</text>
<text x="697.7" y="490.8" font-size="11.5" fill="#dcdcdc" font-weight="400" text-anchor="middle">H</text>
<text x="766.6" y="490.8" font-size="11.5" fill="#dcdcdc" font-weight="400" text-anchor="middle">I</text>
<path d="M984.0 477.4 V496" stroke="#7a7a7a" stroke-width="1" fill="none" />
<text x="1018.6" y="490.8" font-size="11.5" fill="#dcdcdc" font-weight="400" text-anchor="middle">J</text>
<path d="M1053.1 477.4 V496" stroke="#7a7a7a" stroke-width="1" fill="none" />
<text x="1087.7" y="490.8" font-size="11.5" fill="#dcdcdc" font-weight="400" text-anchor="middle">K</text>
<path d="M1122.2 477.4 V496" stroke="#7a7a7a" stroke-width="1" fill="none" />
<text x="1156.8" y="490.8" font-size="11.5" fill="#dcdcdc" font-weight="400" text-anchor="middle">L</text>
<path d="M1191.3 477.4 V496" stroke="#7a7a7a" stroke-width="1" fill="none" />
<text x="1225.9" y="490.8" font-size="11.5" fill="#dcdcdc" font-weight="400" text-anchor="middle">M</text>
<path d="M1260.4 477.4 V496" stroke="#7a7a7a" stroke-width="1" fill="none" />
<text x="1295.0" y="490.8" font-size="11.5" fill="#dcdcdc" font-weight="400" text-anchor="middle">N</text>
<path d="M1329.5 477.4 V496" stroke="#7a7a7a" stroke-width="1" fill="none" />
<text x="1364.1" y="490.8" font-size="11.5" fill="#dcdcdc" font-weight="400" text-anchor="middle">O</text>
<path d="M984 496.2 H1390.5" stroke="#9a9a9a" stroke-width="1" fill="none" />
<path d="M38.1 518.3 V653.9" stroke="#9c9c9c" stroke-width="1.1" fill="none" />
<rect x="38.6" y="589.6" width="19.1" height="20.3" fill="url(#vg)" />
<path d="M38.1 524.2 H40.4" stroke="#9c9c9c" stroke-width="1.1" fill="none" />
<path d="M38.1 532.9 H45.7" stroke="#9c9c9c" stroke-width="1.1" fill="none" />
<path d="M38.1 543.1 H40.4" stroke="#9c9c9c" stroke-width="1.1" fill="none" />
<path d="M38.1 552.1 H55.1" stroke="#9c9c9c" stroke-width="1.1" fill="none" />
<path d="M38.1 562.3 H40.4" stroke="#9c9c9c" stroke-width="1.1" fill="none" />
<path d="M38.1 571 H45.7" stroke="#9c9c9c" stroke-width="1.1" fill="none" />
<path d="M38.1 580.9 H40.4" stroke="#9c9c9c" stroke-width="1.1" fill="none" />
<path d="M38.1 601.1 H40.4" stroke="#9c9c9c" stroke-width="1.1" fill="none" />
<path d="M38.1 611 H45.7" stroke="#9c9c9c" stroke-width="1.1" fill="none" />
<path d="M38.1 620.1 H40.4" stroke="#9c9c9c" stroke-width="1.1" fill="none" />
<path d="M38.1 629.9 H57.7" stroke="#9c9c9c" stroke-width="1.1" fill="none" />
<path d="M38.1 639.7 H40.4" stroke="#9c9c9c" stroke-width="1.1" fill="none" />
<path d="M38.1 650.2 H45.7" stroke="#9c9c9c" stroke-width="1.1" fill="none" />
<path d="M39.5 556.4 H46.8 M39.5 634.3 H46.8" stroke="#e0e0e0" stroke-width="1.3" fill="none" />
<rect x="66" y="588.9" width="26.8" height="21" fill="#6a6a6a" />
<rect x="91" y="588.9" width="2" height="21" fill="#3f8b5c" />
<path d="M92.6 609.9 V653.9" stroke="#8a8a8a" stroke-width="1" fill="none" />
<path d="M66 629.6 H92.6 M66 649.2 H92.6" stroke="#8a8a8a" stroke-width="1" fill="none" />
<path d="M66 589.4 H91 M66 609.6 H91" stroke="#a8a8a8" stroke-width="1" fill="none" />
<text x="79.6" y="605.3" font-size="12.6" fill="#f0f0f0" font-weight="400" text-anchor="middle">1</text>
<text x="79.6" y="625.2" font-size="12.6" fill="#dcdcdc" font-weight="400" text-anchor="middle">2</text>
<text x="79.6" y="644.6" font-size="12.6" fill="#dcdcdc" font-weight="400" text-anchor="middle">3</text>
<text x="181.6" y="542.7" font-size="11.8" fill="#6e6e6e" font-weight="400" textLength="58.9" lengthAdjust="spacingAndGlyphs">Ylätunniste</text>
<path d="M249.5 588 V653.7" stroke="#dedede" stroke-width="1" fill="none" />
<path d="M317.8 588 V653.7" stroke="#dedede" stroke-width="1" fill="none" />
<path d="M386.8 588 V653.7" stroke="#dedede" stroke-width="1" fill="none" />
<path d="M455.8 588 V653.7" stroke="#dedede" stroke-width="1" fill="none" />
<path d="M525 588 V653.7" stroke="#dedede" stroke-width="1" fill="none" />
<path d="M594 588 V653.7" stroke="#dedede" stroke-width="1" fill="none" />
<path d="M662.8 588 V653.7" stroke="#dedede" stroke-width="1" fill="none" />
<path d="M731.8 588 V653.7" stroke="#dedede" stroke-width="1" fill="none" />
<path d="M801 588 V653.7" stroke="#dedede" stroke-width="1" fill="none" />
<path d="M179.2 609.5 H801" stroke="#dedede" stroke-width="1" fill="none" />
<path d="M179.2 629.4 H801" stroke="#dedede" stroke-width="1" fill="none" />
<path d="M179.2 649.1 H801" stroke="#dedede" stroke-width="1" fill="none" />
<rect x="180.4" y="546.8" width="660.4" height="41.2" stroke="#a6a6a6" stroke-width="1" fill="none" />
<rect x="400.8" y="547.4" width="219.2" height="40.2" stroke="#505050" stroke-width="1.8" fill="#ffffff" />
<path d="M179.6 588.3 V653.7" stroke="#dedede" stroke-width="1" fill="none" />
<rect x="179.6" y="589.1" width="69.6" height="20.6" stroke="#217346" stroke-width="2" fill="none" />
<rect x="246.6" y="606.9" width="5" height="5" fill="#217346" />
<path d="M984.3 589.5 V653.7" stroke="#dcdcdc" stroke-width="1" fill="none" />
<path d="M1053.2 589.5 V653.7" stroke="#dcdcdc" stroke-width="1" fill="none" />
<path d="M1122 589.5 V653.7" stroke="#dcdcdc" stroke-width="1" fill="none" />
<path d="M1191 589.5 V653.7" stroke="#dcdcdc" stroke-width="1" fill="none" />
<path d="M1260.2 589.5 V653.7" stroke="#dcdcdc" stroke-width="1" fill="none" />
<path d="M1329 589.5 V653.7" stroke="#dcdcdc" stroke-width="1" fill="none" />
<path d="M984.3 589.5 H1390.6" stroke="#dcdcdc" stroke-width="1" fill="none" />
<path d="M984.3 609.4 H1390.6" stroke="#dcdcdc" stroke-width="1" fill="none" />
<path d="M984.3 629.3 H1390.6" stroke="#dcdcdc" stroke-width="1" fill="none" />
<path d="M984.3 649.2 H1390.6" stroke="#dcdcdc" stroke-width="1" fill="none" />
<clipPath id="gp"><rect x="916.4" y="517" width="474.2" height="136.8"/></clipPath><g clip-path="url(#gp)">
<text x="1238.2" y="576.9" font-size="21.6" fill="#a6a6a6" font-weight="400" textLength="153.8" lengthAdjust="spacingAndGlyphs">Lisää ylätunniste</text>
</g>
<text x="997.6" y="624.2" font-size="21.6" fill="#a6a6a6" font-weight="400" textLength="293.8" lengthAdjust="spacingAndGlyphs">Lisää tiedot napsauttamalla tätä</text>
<path d="M152.0 66.6 C157.3 65.7 160.0 65.2 168.0 63.9 C176.0 62.6 186.0 61.0 200.0 58.9 C214.0 56.8 232.0 53.9 252.0 51.2 C272.0 48.5 296.5 45.2 320.0 42.5 C343.5 39.8 363.5 37.5 393.0 35.2 C422.5 33.0 455.0 30.8 497.0 29.0 C539.0 27.2 599.8 24.9 645.0 24.4 C690.2 23.9 731.5 24.8 768.0 26.0 C804.5 27.2 832.0 29.0 864.0 31.7 C896.0 34.4 936.0 38.5 960.0 42.0 C984.0 45.5 993.2 48.8 1008.0 53.0 C1022.8 57.2 1040.3 63.9 1049.0 67.0 C1057.7 70.1 1056.3 70.1 1060.0 71.6" stroke="#14ea14" stroke-width="2.3" fill="none" stroke-dasharray="8.2 7.9" stroke-dashoffset="4.0"/>
<path d="M1082.6 82.1 L1057.5 58.3 L1058.2 69.8 L1048.2 76.6 Z" stroke="#14ea14" stroke-width="0.8" fill="#14ea14" />
<path d="M697.9 383 L710.9 420.8" stroke="#14ea14" stroke-width="2.2" fill="none" stroke-dasharray="7.5 8.5"/>
<path d="M692.2 359.9 L691.1 385 L697.2 379.8 L705.9 380.9 Z" stroke="#14ea14" stroke-width="0.8" fill="#14ea14" />
</svg>
</body></html>
